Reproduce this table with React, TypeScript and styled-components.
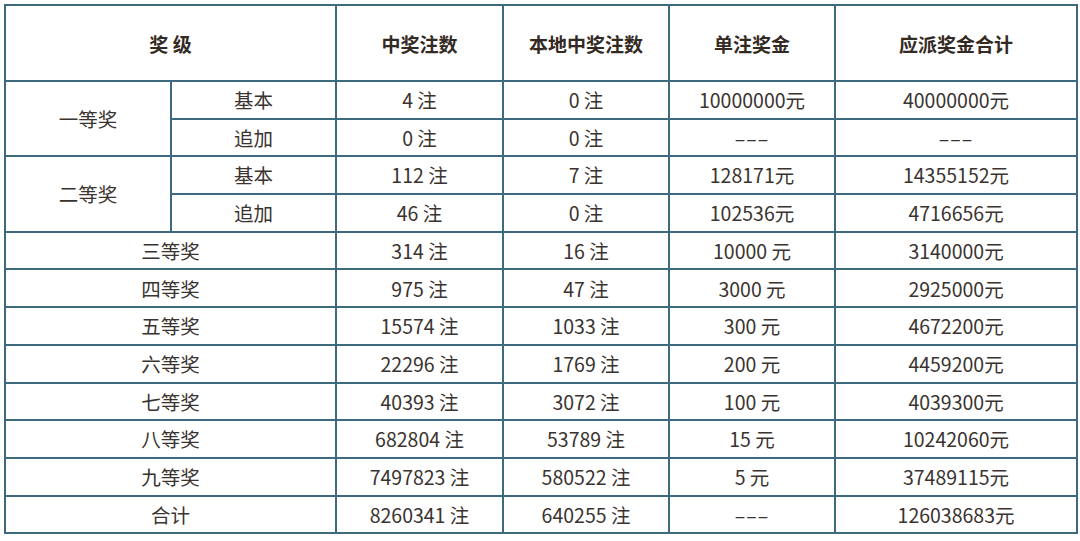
import styled, { createGlobalStyle } from 'styled-components';

const GlobalStyle = createGlobalStyle`
  body {
    margin: 0;
    background: #fff;
    font-family: "Noto Sans CJK SC", "Noto Sans", sans-serif;
  }
`

type Row = {
  label: string;
  sub?: string;
  span?: number;
  count: string;
  local: string;
  prize: string;
  total: string;
}

const DASH = '–––'

const rows: Row[] = [
  { label: '一等奖', sub: '基本', span: 2, count: '4 注', local: '0 注', prize: '10000000元', total: '40000000元' },
  { label: '', sub: '追加', count: '0 注', local: '0 注', prize: DASH, total: DASH },
  { label: '二等奖', sub: '基本', span: 2, count: '112 注', local: '7 注', prize: '128171元', total: '14355152元' },
  { label: '', sub: '追加', count: '46 注', local: '0 注', prize: '102536元', total: '4716656元' },
  { label: '三等奖', count: '314 注', local: '16 注', prize: '10000 元', total: '3140000元' },
  { label: '四等奖', count: '975 注', local: '47 注', prize: '3000 元', total: '2925000元' },
  { label: '五等奖', count: '15574 注', local: '1033 注', prize: '300 元', total: '4672200元' },
  { label: '六等奖', count: '22296 注', local: '1769 注', prize: '200 元', total: '4459200元' },
  { label: '七等奖', count: '40393 注', local: '3072 注', prize: '100 元', total: '4039300元' },
  { label: '八等奖', count: '682804 注', local: '53789 注', prize: '15 元', total: '10242060元' },
  { label: '九等奖', count: '7497823 注', local: '580522 注', prize: '5 元', total: '37489115元' },
  { label: '合计', count: '8260341 注', local: '640255 注', prize: DASH, total: '126038683元' },
]

export default function App() {
  return (
    <Page>
      <GlobalStyle />
      <Table>
        <colgroup>
          <col style={{ width: 166 }} />
          <col style={{ width: 165 }} />
          <col style={{ width: 167 }} />
          <col style={{ width: 166 }} />
          <col style={{ width: 166 }} />
          <col style={{ width: 242 }} />
        </colgroup>
        <thead>
          <HeadRow>
            <Th colSpan={2}>奖&nbsp;级</Th>
            <Th>中奖注数</Th>
            <Th>本地中奖注数</Th>
            <Th>单注奖金</Th>
            <Th>应派奖金合计</Th>
          </HeadRow>
        </thead>
        <tbody>
          {rows.map((r, i) => (
            <BodyRow key={i}>
              {r.sub ? (
                <>
                  {r.span && <Td rowSpan={r.span}>{r.label}</Td>}
                  <Td>{r.sub}</Td>
                </>
              ) : (
                <Td colSpan={2}>{r.label}</Td>
              )}
              <Td>{r.count}</Td>
              <Td>{r.local}</Td>
              <Td $dash={r.prize === DASH}>{r.prize}</Td>
              <Td $dash={r.total === DASH}>{r.total}</Td>
            </BodyRow>
          ))}
        </tbody>
      </Table>
    </Page>
  )
}

const Page = styled.div`
  padding: 4px;
`

const Table = styled.table`
  width: 1072px;
  table-layout: fixed;
  border-collapse: collapse;
  border: 2px solid #3d6a7e;
  color: #3a3330;
`

const HeadRow = styled.tr`
  height: 76px;
`

const BodyRow = styled.tr`
  height: 37.7px;
`

const Th = styled.th`
  border: 2px solid #3d6a7e;
  font-size: 19px;
  font-weight: 700;
  text-align: center;
  vertical-align: middle;
  padding: 0;
  color: #332a24;
`

const Td = styled.td<{ $dash?: boolean }>`
  border: 2px solid #3d6a7e;
  font-size: 19.5px;
  font-weight: 400;
  text-align: center;
  vertical-align: middle;
  padding: 0;
  line-height: 1;
  letter-spacing: ${p => (p.$dash ? '1px' : '0')};
`
